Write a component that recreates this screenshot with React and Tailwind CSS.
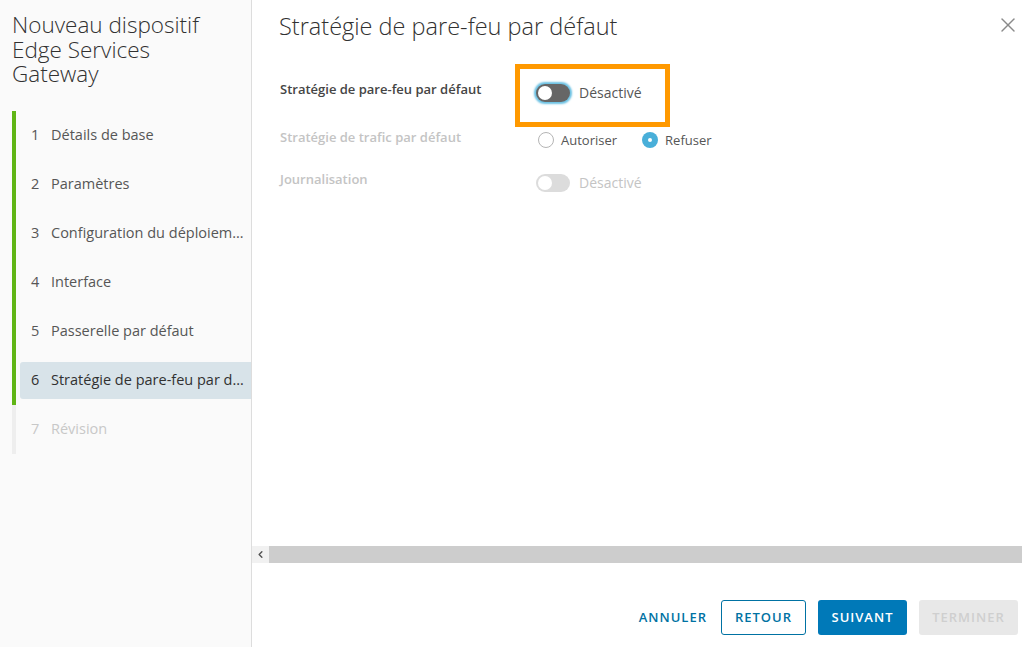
import { X, ChevronLeft } from 'lucide-react';

const steps = [
  { n: 1, label: 'Détails de base', state: 'done' },
  { n: 2, label: 'Paramètres', state: 'done' },
  { n: 3, label: 'Configuration du déploiement', state: 'done' },
  { n: 4, label: 'Interface', state: 'done' },
  { n: 5, label: 'Passerelle par défaut', state: 'done' },
  { n: 6, label: 'Stratégie de pare-feu par défaut', state: 'current' },
  { n: 7, label: 'Révision', state: 'todo' },
];

function Toggle({ disabled }) {
  return (
    <div
      className={`relative h-[18px] w-[34px] shrink-0 rounded-full ${
        disabled ? 'bg-[#dcdcdc]' : 'bg-[#666] shadow-[0_0_2px_2px_#6bc1e3]'
      }`}
    >
      <div className="absolute left-[2px] top-[2px] h-[14px] w-[14px] rounded-full bg-white" />
    </div>
  );
}

export default function App() {
  return (
    <div
      className="flex h-[647px] w-[1025px] overflow-hidden bg-white text-[#565656]"
      style={{ fontFamily: '"Open Sans", sans-serif' }}
    >
      {/* sidebar */}
      <aside className="flex w-[252px] shrink-0 flex-col border-r border-[#ddd] bg-[#fafafa]">
        <h1 className="w-[215px] pl-[12px] pt-[13px] text-[22.5px] font-light leading-[24.5px] text-[#313131]">
          Nouveau dispositif Edge Services Gateway
        </h1>
        <nav className="mt-[24px] ml-[12px]">
          {steps.map((s) => (
            <div
              key={s.n}
              className={`flex h-[49px] items-center border-l-4 pl-[4px] ${
                s.state === 'todo' ? 'border-[#eee]' : 'border-[#60b515]'
              }`}
            >
              <div
                className={`flex h-[37px] w-full min-w-0 items-center rounded-l-[3px] pl-[11px] text-[14.5px] ${
                  s.state === 'current'
                    ? 'bg-[#d8e3e9] font-medium text-[#313131]'
                    : s.state === 'todo'
                    ? 'text-[#c8c8c8]'
                    : 'text-[#565656]'
                }`}
              >
                <span className="w-[20px] shrink-0">{s.n}</span>
                <span className="min-w-0 truncate pr-[3px]">{s.label}</span>
              </div>
            </div>
          ))}
        </nav>
      </aside>

      {/* main */}
      <main className="flex min-w-0 flex-1 flex-col">
        <div className="flex items-start justify-between pl-[27px] pr-[5px] pt-[10px]">
          <h2 className="text-[23.5px] font-light leading-[32px] text-[#313131]">
            Stratégie de pare-feu par défaut
          </h2>
          <X className="mt-[3px] h-[24px] w-[24px] text-[#8a8a8a]" strokeWidth={1.4} />
        </div>

        <div className="mt-[22px] pl-[28px]">
          <div className="flex items-start">
            <div className="mt-[16px] w-[235px] text-[13px] font-semibold leading-[18px] text-[#454545]">
              Stratégie de pare-feu par défaut
            </div>
            <div className="flex h-[63px] w-[155px] items-start gap-[9px] border-[5px] border-[#ff9900] pl-[16px] pt-[15px]">
              <Toggle />
              <span className="text-[14px] leading-[18px] text-[#565656]">Désactivé</span>
            </div>
          </div>

          <div className="flex h-[43px] items-start">
            <div className="mt-[1px] w-[258px] text-[13px] font-semibold leading-[18px] text-[#c4c4c4]">
              Stratégie de trafic par défaut
            </div>
            <label className="mt-[5px] flex items-center gap-[7px] text-[13px] leading-[16px] text-[#565656]">
              <span className="h-[16px] w-[16px] rounded-full border border-[#b5b5b5] bg-white" />
              Autoriser
            </label>
            <label className="ml-[25px] mt-[5px] flex items-center gap-[7px] text-[13px] leading-[16px] text-[#565656]">
              <span className="flex h-[16px] w-[16px] items-center justify-center rounded-full bg-[#49afd9]">
                <span className="h-[4px] w-[4px] rounded-full bg-white" />
              </span>
              Refuser
            </label>
          </div>

          <div className="flex items-start">
            <div className="w-[256px] text-[13px] font-semibold leading-[18px] text-[#c4c4c4]">
              Journalisation
            </div>
            <div className="mt-[4px] flex items-center gap-[9px]">
              <Toggle disabled />
              <span className="text-[14px] leading-[18px] text-[#c4c4c4]">Désactivé</span>
            </div>
          </div>
        </div>

        <div className="flex-1" />

        {/* horizontal scrollbar */}
        <div className="flex h-[17px] pr-[3px]">
          <div className="flex w-[17px] items-center justify-center bg-[#f1f1f1]">
            <ChevronLeft className="h-[11px] w-[11px] text-[#505050]" strokeWidth={3} />
          </div>
          <div className="flex-1 bg-[#cdcdcd]" />
        </div>

        {/* footer */}
        <div className="flex h-[84px] items-start justify-end gap-[12px] pr-[7px] pt-[37px] text-[13px] font-semibold tracking-[1px]">
          <button className="h-[35px] pl-[12px] pr-[2px] text-[#0072a3]">ANNULER</button>
          <button className="h-[35px] w-[85px] rounded-[3px] border border-[#0072a3] text-[#0072a3]">
            RETOUR
          </button>
          <button className="h-[35px] w-[89px] rounded-[3px] bg-[#0079b8] text-white">SUIVANT</button>
          <button className="h-[35px] w-[99px] rounded-[3px] bg-[#e8e8e8] text-[#cfcfcf]">TERMINER</button>
        </div>
      </main>
    </div>
  );
}
